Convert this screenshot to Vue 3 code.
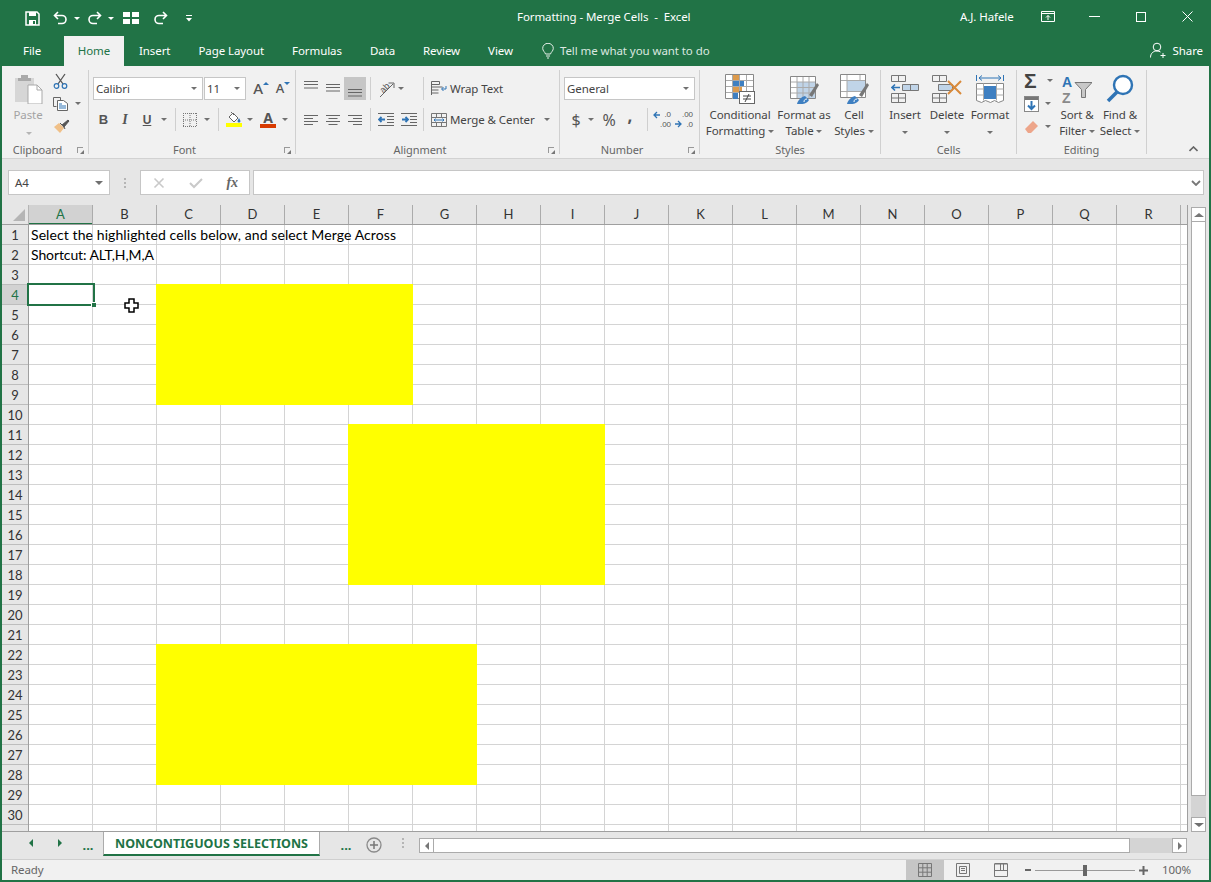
<script setup>
const cols = 'ABCDEFGHIJKLMNOPQR'.split('').concat([''])
const rows = Array.from({ length: 31 }, (_, i) => i + 1)
const blocks = [
  { c: 3, cs: 4, r: 4, rs: 6 },
  { c: 6, cs: 4, r: 11, rs: 8 },
  { c: 3, cs: 5, r: 22, rs: 7 },
]
function area(b) {
  return { gridColumn: `${b.c} / span ${b.cs}`, gridRow: `${b.r} / span ${b.rs}` }
}
</script>

<template>
  <div class="win">
    <header class="title">
      <div class="qat">
        <svg class="q1" width="15" height="15" viewBox="0 0 15 15"><path d="M1 1h11l2 2v11H1z" fill="none" stroke="#fff" stroke-width="1.5"/><rect x="4" y="1" width="7" height="4" fill="#fff"/><rect x="4" y="9" width="7" height="5" fill="#fff"/><rect x="8" y="10" width="2" height="3" fill="#217346"/></svg>
        <svg class="q2" width="15" height="14" viewBox="0 0 15 14"><path d="M5 1 1.500 4.500 5 8M2 4.500h7a4 4 0 0 1 0 8H5" fill="none" stroke="#fff" stroke-width="1.6"/></svg>
        <i class="car white q3"></i>
        <svg class="q4" width="15" height="14" viewBox="0 0 15 14"><path d="M10 1l3.500 3.500L10 8M13 4.500H6a4 4 0 0 0 0 8h4" fill="none" stroke="#fff" stroke-width="1.6"/></svg>
        <i class="car white q5"></i>
        <svg class="q6" width="16" height="12" viewBox="0 0 16 12"><path d="M0 0h7v5H0zM9 0h7v5H9zM0 7h7v5H0zM9 7h7v5H9z" fill="#fff"/></svg>
        <svg class="q7" width="15" height="14" viewBox="0 0 15 14"><path d="M10 1l3.500 3.500L10 8M13 4.500H6a4 4 0 0 0 0 8h4" fill="none" stroke="#fff" stroke-width="1.6"/></svg>
        <svg class="q8" width="6" height="7" viewBox="0 0 6 7"><path d="M0 0h6v1H0zM0 3h6L3 6.500z" fill="#fff"/></svg>
      </div>
      <div class="doc">Formatting - Merge Cells &nbsp;-&nbsp; Excel</div>
      <div class="user">A.J. Hafele</div>
      <svg class="wc1" width="14" height="11" viewBox="0 0 14 11"><path d="M.5.500h13v10H.5zM.5 2.500h13M7 9V4.500M5 6.500l2-2 2 2" fill="none" stroke="#fff"/></svg>
      <svg class="wc2" width="11" height="1" viewBox="0 0 11 1"><rect width="11" height="1" fill="#fff"/></svg>
      <svg class="wc3" width="10" height="10" viewBox="0 0 10 10"><rect x=".5" y=".5" width="9" height="9" fill="none" stroke="#fff"/></svg>
      <svg class="wc4" width="11" height="11" viewBox="0 0 11 11"><path d="M.5.500l10 10M10.500.500l-10 10" stroke="#fff" fill="none"/></svg>
    </header>

    <nav class="tabs">
      <span class="tab file">File</span>
      <span class="tab home">Home</span>
      <span class="tab">Insert</span>
      <span class="tab">Page Layout</span>
      <span class="tab">Formulas</span>
      <span class="tab">Data</span>
      <span class="tab">Review</span>
      <span class="tab">View</span>
      <svg class="bulb" width="12" height="16" viewBox="0 0 12 16"><path d="M3.500 11C3 9 .7 8 .7 5.300a5.300 5 0 0 1 10.600 0C11.300 8 9 9 8.500 11zM4 13h4M5 15h2" fill="none" stroke="#e4efe8"/></svg>
      <span class="tell">Tell me what you want to do</span>
      <svg class="person" width="17" height="17" viewBox="0 0 17 17"><circle cx="7" cy="5" r="3.800" fill="none" stroke="#fff"/><path d="M.5 15.500c0-4 2.500-6.500 6.500-6.500 1.500 0 2.500.4 3.500 1M13 11v5M10.500 13.500h5" fill="none" stroke="#fff"/></svg>
      <span class="share">Share</span>
    </nav>

    <section class="ribbon">
      <!-- Clipboard -->
      <div class="group g1">
        <div class="body">
          <div class="big pastebox dim">
            <svg width="30" height="30" viewBox="0 0 30 30"><path d="M1 4h19v24H1z" fill="#d6d6d6"/><path d="M7 4V1h7v3h3v3H4V4z" fill="#a9a9a9"/><path d="M14 11h9l5 5v14H14z" fill="#fff" stroke="#a9a9a9"/><path d="M23 11v5h5" fill="none" stroke="#a9a9a9"/></svg>
            <span class="line pastetext">Paste</span>
            <i class="car pale"></i>
          </div>
          <div class="stack">
            <div class="srow">
              <svg width="15" height="16" viewBox="0 0 15 16"><path d="M3 1l7 10M12 1 5 11" stroke="#555" stroke-width="1.300" fill="none"/><circle cx="3.500" cy="13" r="2.300" fill="none" stroke="#2f74b5" stroke-width="1.200"/><circle cx="11.500" cy="13" r="2.300" fill="none" stroke="#2f74b5" stroke-width="1.200"/></svg>
            </div>
            <div class="srow">
              <svg width="15" height="14" viewBox="0 0 15 14"><path d="M.5.500h7v3M.5.500v9h3" fill="none" stroke="#666"/><path d="M4.500 3.500h6l4 3v7h-10z" fill="#fff" stroke="#666"/><path d="M6 7h3M6 9h7M6 11h7" stroke="#2f74b5"/></svg>
              <i class="car c9"></i>
            </div>
            <div class="srow">
              <svg width="17" height="15" viewBox="0 0 17 15"><path d="M1 8 6 4l5 5-4 5z" fill="#f0c088"/><path d="M7 4l2 2 6-5 1 1-5 6 1 2" fill="#555" stroke="#555"/></svg>
            </div>
          </div>
        </div>
        <div class="label"><span>Clipboard</span><i class="launch"></i></div>
      </div>

      <!-- Font -->
      <div class="group g2">
        <div class="body col">
          <div class="row">
            <div class="combo w110"><span>Calibri</span><i class="car"></i></div>
            <div class="combo w42"><span>11</span><i class="car"></i></div>
            <span class="it w24 growa"><b class="aa a15">A</b><i class="up"></i></span>
            <span class="it w20 growa"><b class="aa a13">A</b><i class="dn"></i></span>
          </div>
          <div class="row">
            <span class="it w21 fb">B</span>
            <span class="it w22 fi">I</span>
            <span class="it w22 fu">U</span>
            <span class="it w12"><i class="car"></i></span>
            <span class="it w11"><i class="sep"></i></span>
            <span class="it w18">
              <svg width="14" height="14" viewBox="0 0 14 14"><path d="M.5 0v14M13.500 0v14M0 .5h14M0 13.500h14M7 0v14M0 7h14" fill="none" stroke="#777" stroke-dasharray="1 1"/></svg>
            </span>
            <span class="it w16"><i class="car"></i></span>
            <span class="it w7"><i class="sep"></i></span>
            <span class="it w24 colorbtn">
              <svg width="14" height="11" viewBox="0 0 14 11"><path d="M2 5 6 1l5 5-4 4z" fill="#fff" stroke="#666"/><path d="M4 0l3 3" stroke="#666"/><path d="M12 6l1.500 3a1.500 1.500 0 0 1-3 0z" fill="#2f74b5"/></svg>
              <i class="bar yellowbar"></i>
            </span>
            <span class="it w8"><i class="car"></i></span>
            <span class="it w28 colorbtn"><b class="fa">A</b><i class="bar redbar"></i></span>
            <span class="it w6"><i class="car"></i></span>
          </div>
        </div>
        <div class="label"><span>Font</span><i class="launch"></i></div>
      </div>

      <!-- Alignment -->
      <div class="group g3">
        <div class="body col">
          <div class="row">
            <span class="it w22"><svg class="vtop" width="14" height="8" viewBox="0 0 14 8"><path d="M0 .5h14M0 3.500h14M0 7h14" stroke="#666"/></svg></span>
            <span class="it w22"><svg class="vmid" width="14" height="8" viewBox="0 0 14 8"><path d="M0 .5h14M0 3.500h14M0 7h14" stroke="#666"/></svg></span>
            <span class="it w22 hot"><svg class="vbot" width="14" height="8" viewBox="0 0 14 8"><path d="M0 .5h14M0 3.500h14M0 7h14" stroke="#666"/></svg></span>
            <span class="it w8"><i class="sep"></i></span>
            <span class="it w24"><svg width="18" height="18" viewBox="0 0 18 18"><path d="M3 17 16 4" stroke="#666" fill="none"/><path d="M11.500 3H17v5" fill="none" stroke="#666"/><text x="4" y="12" class="svgt" transform="rotate(-45 7 10)">ab</text></svg></span>
            <span class="it w6"><i class="car"></i></span>
            <span class="it w15"></span>
            <span class="it w8"><i class="sep"></i></span>
            <span class="it w23"><svg width="16" height="15" viewBox="0 0 16 15"><path d="M.5.500h8v3h-8zM.5 6h11M.5 9h7M.5 12h7M.5 3v11" fill="none" stroke="#666"/><path d="M15 5v3h-4M12.500 6l-2 2 2 2" fill="none" stroke="#2f74b5"/></svg></span>
            <span class="txt">Wrap Text</span>
          </div>
          <div class="row">
            <span class="it w22"><svg width="14" height="10" viewBox="0 0 14 10"><path d="M0 .5h14M0 3.500h9M0 6.500h14M0 9.500h9" stroke="#666"/></svg></span>
            <span class="it w22"><svg width="14" height="10" viewBox="0 0 14 10"><path d="M0 .5h14M2.500 3.500h9M0 6.500h14M2.500 9.500h9" stroke="#666"/></svg></span>
            <span class="it w22"><svg width="14" height="10" viewBox="0 0 14 10"><path d="M0 .5h14M5 3.500h9M0 6.500h14M5 9.500h9" stroke="#666"/></svg></span>
            <span class="it w8"><i class="sep"></i></span>
            <span class="it w24"><svg width="16" height="13" viewBox="0 0 16 13"><path d="M0 .5h16M9 3.500h7M9 6.500h7M9 9.500h7M0 12.500h16" stroke="#666" fill="none"/><path d="M7 6.500H1M3.500 4 1 6.500 3.500 9" fill="none" stroke="#2f74b5" stroke-width="1.800"/></svg></span>
            <span class="it w21"><svg width="16" height="13" viewBox="0 0 16 13"><path d="M0 .5h16M9 3.500h7M9 6.500h7M9 9.500h7M0 12.500h16" stroke="#666" fill="none"/><path d="M1 6.500h6M4.500 4 7 6.500 4.500 9" fill="none" stroke="#2f74b5" stroke-width="1.800"/></svg></span>
            <span class="it w8"><i class="sep"></i></span>
            <span class="it w23"><svg width="16" height="14" viewBox="0 0 16 14"><path d="M.5.500h15v13H.5zM.5 4.500h15M.5 9.500h15M5.500.5v4M10.500.5v4M5.500 9.500v4M10.500 9.500v4" fill="none" stroke="#777"/><path d="M3 7h10M4.500 5.500 3 7l1.500 1.500M11.500 5.500 13 7l-1.500 1.500" fill="none" stroke="#2f74b5"/></svg></span>
            <span class="txt mc">Merge &amp; Center</span>
            <i class="car"></i>
          </div>
        </div>
        <div class="label"><span>Alignment</span><i class="launch"></i></div>
      </div>

      <!-- Number -->
      <div class="group g4">
        <div class="body col">
          <div class="row">
            <div class="combo w131"><span>General</span><i class="car"></i></div>
          </div>
          <div class="row">
            <span class="it w24 sym">$</span>
            <span class="it w6"><i class="car"></i></span>
            <span class="it w30 sym">%</span>
            <span class="it w12 sym comma">,</span>
            <span class="it w7"></span>
            <span class="it w8"><i class="sep"></i></span>
            <span class="it w22 dec"><svg width="7" height="8" viewBox="0 0 7 8"><path d="M7 4H1M4 1 1 4l3 3" fill="none" stroke="#2f74b5" stroke-width="1.300"/></svg><span class="dect"><span>.0</span><span>.00</span></span></span>
            <span class="it w22 dec"><svg width="7" height="8" class="low" viewBox="0 0 7 8"><path d="M0 4h6M3 1l3 3-3 3" fill="none" stroke="#2f74b5" stroke-width="1.300"/></svg><span class="dect"><span>.00</span><span>.0</span></span></span>
          </div>
        </div>
        <div class="label"><span>Number</span><i class="launch"></i></div>
      </div>

      <!-- Styles -->
      <div class="group g5">
        <div class="body">
          <div class="big w64">
            <svg width="30" height="30" viewBox="0 0 30 30"><path d="M.5.500h28v24H.5z" fill="#fff" stroke="#888"/><path d="M7 1h7v6H7zM7 13h10v6H7z" fill="#dc9a4c"/><path d="M7 7h12v6H7zM7 19h6v6H7z" fill="#3e7fc1"/><path d="M7.500 1v24M14.500 1v24M21.500 1v18M1 6.500h27M1 12.500h27M1 18.500h27" stroke="#aaa" fill="none"/><rect x="14.500" y="17.500" width="15" height="12" fill="#fff" stroke="#666"/><path d="M18 22h8M18 25h8M24 20l-4 8" stroke="#444" fill="none"/></svg>
            <span class="line">Conditional</span>
            <span class="line">Formatting <i class="car"></i></span>
          </div>
          <div class="big w64">
            <svg width="30" height="30" viewBox="0 0 30 30"><path d="M1.500 2.500h25v22h-25z" fill="#fff" stroke="#888"/><rect x="8" y="8" width="18" height="16" fill="#c0d4e8"/><path d="M8 3v21M14 3v21M20 3v21M2 8h24M2 13.500h24M2 19h24" stroke="#aaa" fill="none"/><path d="M20 21 28 9l2 2-7 12z" fill="#777"/><path d="M8 30c1-4 4-7 8-8l4 4c-1 3-7 5-12 4z" fill="#3e7fc1"/><path d="M15 28c0-2 1-3 3-3" fill="none" stroke="#fff"/></svg>
            <span class="line">Format as</span>
            <span class="line">Table <i class="car"></i></span>
          </div>
          <div class="big w36">
            <svg width="30" height="30" viewBox="0 0 30 30"><path d="M1.500.5h25v23h-25z" fill="#fff" stroke="#888"/><rect x="8" y="6" width="18" height="11" fill="#c0d4e8"/><path d="M8 1v22M2 6.500h24M2 17.500h24M21 1v5" stroke="#aaa" fill="none"/><path d="M20 21 28 9l2 2-7 12z" fill="#777"/><path d="M8 30c1-4 4-7 8-8l4 4c-1 3-7 5-12 4z" fill="#3e7fc1"/><path d="M15 28c0-2 1-3 3-3" fill="none" stroke="#fff"/></svg>
            <span class="line">Cell</span>
            <span class="line">Styles <i class="car"></i></span>
          </div>
        </div>
        <div class="label nol"><span>Styles</span></div>
      </div>

      <!-- Cells -->
      <div class="group g6">
        <div class="body">
          <div class="big w38">
            <svg width="28" height="28" viewBox="0 0 28 28"><path d="M.5.500h14v6H.5zM7.500.5v6M.5 18.500h14v9H.5zM.5 23h14M7.500 18.500v9" fill="none" stroke="#777"/><path d="M11.500 9.500h16v6h-16zM19.500 9.500v6" fill="#c0d4e8" stroke="#777"/><path d="M9 12.500H1M4 9.500l-3 3 3 3" fill="none" stroke="#2f74b5" stroke-width="1.600"/></svg>
            <span class="line">Insert</span>
            <i class="car under"></i>
          </div>
          <div class="big w46">
            <svg width="30" height="28" viewBox="0 0 30 28"><path d="M.5.500h14v6H.5zM7.500.5v6M.5 18.500h14v9H.5zM.5 23h14M7.500 18.500v9" fill="none" stroke="#777"/><path d="M6.500 9.500h14v6h-14z" fill="#c0d4e8" stroke="#777"/><path d="M16 6l13 13M29 6 16 19" stroke="#d98a3a" stroke-width="2" fill="none"/></svg>
            <span class="line">Delete</span>
            <i class="car under"></i>
          </div>
          <div class="big w40">
            <svg width="28" height="30" viewBox="0 0 28 30"><path d="M.5 1v6M27.500 1v6M3 4h22M6 1.500 3 4l3 2.500M22 1.500 25 4l-3 2.500" fill="none" stroke="#2f74b5"/><path d="M.5 9.500h27v17l-5 2-4-2-4 2-5-2-4 2-5-2z" fill="#fff" stroke="#888"/><path d="M7.500 9.500v17M20.500 9.500v17M.5 15h27M.5 21h27" fill="none" stroke="#aaa"/><rect x="8" y="12" width="12" height="13" fill="#3e7fc1"/></svg>
            <span class="line">Format</span>
            <i class="car under"></i>
          </div>
        </div>
        <div class="label nol"><span>Cells</span></div>
      </div>

      <!-- Editing -->
      <div class="group g7">
        <div class="body">
          <div class="stack st2">
            <div class="srow"><span class="sigma">Σ</span><i class="car c8"></i></div>
            <div class="srow">
              <svg width="15" height="16" viewBox="0 0 15 16"><rect x=".5" y=".5" width="14" height="15" fill="#fff" stroke="#888"/><rect x="1" y="1" width="13" height="3" fill="#777"/><path d="M7.500 5v8M4 9.500l3.500 3.500L11 9.500" fill="none" stroke="#2f74b5" stroke-width="2"/></svg>
              <i class="car c6"></i>
            </div>
            <div class="srow">
              <svg width="15" height="14" viewBox="0 0 15 14"><path d="M1 9 9 1l5 5-7 7H4z" fill="#eda58a"/></svg>
              <i class="car c6"></i>
            </div>
          </div>
          <div class="big w48">
            <svg class="sorticon" width="30" height="32" viewBox="0 0 30 32"><text x="0" y="13" class="az blue">A</text><text x="0" y="28.700" class="az grey">Z</text><path d="M13 8.500h17l-6.500 7v8h-4v-8z" fill="#c8c8c8" stroke="#777"/></svg>
            <span class="line">Sort &amp;</span>
            <span class="line">Filter <i class="car"></i></span>
          </div>
          <div class="big w38">
            <svg width="28" height="30" viewBox="0 0 28 30"><circle cx="17" cy="11" r="9" fill="#fff" stroke="#2f74b5" stroke-width="2.400"/><path d="M11 18 2 27" stroke="#2f74b5" stroke-width="3.600"/></svg>
            <span class="line">Find &amp;</span>
            <span class="line">Select <i class="car"></i></span>
          </div>
        </div>
        <div class="label nol"><span>Editing</span></div>
      </div>

      <div class="collapse">
        <svg width="9" height="6" viewBox="0 0 9 6"><path d="M.5 5 4.500 1l4 4" fill="none" stroke="#666" stroke-width="1.600"/></svg>
      </div>
    </section>

    <section class="fbar">
      <div class="namebox"><span>A4</span><i class="car big-car"></i></div>
      <div class="grip"><i></i><i></i><i></i></div>
      <div class="fxbox">
        <svg width="13" height="12" viewBox="0 0 13 12"><path d="M1.500 1.500l9 9M10.500 1.500l-9 9" stroke="#c9c9c9" stroke-width="1.600" fill="none"/></svg>
        <svg width="14" height="12" viewBox="0 0 14 12"><path d="M1 6l4 4 8-8" stroke="#c9c9c9" stroke-width="2" fill="none"/></svg>
        <span class="fx">fx</span>
      </div>
      <div class="finput">
        <svg width="10" height="6" viewBox="0 0 10 6"><path d="M1 1l4 4 4-4" fill="none" stroke="#777" stroke-width="1.800"/></svg>
      </div>
    </section>

    <section class="sheet">
      <div class="gridwrap">
        <div class="colhead">
          <div class="corner"><i></i></div>
          <div v-for="(c, i) in cols" :key="i" class="ch" :class="{ act: c === 'A' }">{{ c }}</div>
        </div>
        <div class="gridbody">
          <div class="rowhead">
            <div v-for="r in rows" :key="r" class="rh" :class="{ act: r === 4 }">{{ r < 31 ? r : '' }}</div>
          </div>
          <div class="cells">
            <div class="celltext t1">Select the highlighted cells below, and select Merge Across</div>
            <div class="celltext t2">Shortcut: ALT,H,M,A</div>
            <div v-for="(b, i) in blocks" :key="i" class="fill" :style="area(b)"></div>
            <div class="sel"><i class="handle"></i></div>
            <svg class="cursor" width="15" height="15" viewBox="0 0 15 15"><path d="M5 1h5v4h4v5h-4v4H5v-4H1V5h4z" fill="#fff" stroke="#000" stroke-width="1.500"/></svg>
          </div>
        </div>
      </div>
      <div class="vscroll">
        <div class="sbtn"><i class="car upc"></i></div>
        <div class="vthumb"></div>
        <div class="vtrack"></div>
        <div class="sbtn"><i class="car dnc"></i></div>
      </div>
    </section>

    <section class="tabbar">
      <span class="nav n1"><i class="tl"></i></span>
      <span class="nav n2"><i class="tr"></i></span>
      <span class="dots d1">...</span>
      <span class="stab">NONCONTIGUOUS SELECTIONS</span>
      <span class="dots d2">...</span>
      <svg class="plus" width="16" height="16" viewBox="0 0 16 16"><circle cx="8" cy="8" r="7" fill="none" stroke="#8a8a8a" stroke-width="1.300"/><path d="M8 4v8M4 8h8" stroke="#777" stroke-width="1.500"/></svg>
      <div class="grip g2b"><i></i><i></i><i></i></div>
      <div class="hscroll">
        <div class="hbtn"><i class="tl grey"></i></div>
        <div class="hthumb"></div>
        <div class="htrack"></div>
        <div class="hbtn"><i class="tr grey"></i></div>
      </div>
    </section>

    <footer class="status">
      <span class="ready">Ready</span>
      <div class="view on">
        <svg width="14" height="14" viewBox="0 0 14 14"><path d="M.5.500h13v13H.5zM4.800.5v13M9.200.5v13M.5 4.800h13M.5 9.200h13" fill="none" stroke="#777"/></svg>
      </div>
      <div class="view">
        <svg width="14" height="14" viewBox="0 0 14 14"><path d="M.5.500h13v13H.5z" fill="none" stroke="#777"/><path d="M3.500 3.500h7v7h-7zM5 5.500h4M5 7.500h4" fill="none" stroke="#777"/></svg>
      </div>
      <div class="view">
        <svg width="14" height="14" viewBox="0 0 14 14"><path d="M.5 1v12.500h13V1zM.5.500h13M.5 7.500h13M6.500.5v7M9.500.5v7" fill="none" stroke="#777"/></svg>
      </div>
      <span class="zm">
        <i class="minus"></i>
        <span class="slider"><i class="knob"></i></span>
        <svg width="9" height="9" viewBox="0 0 9 9"><path d="M4.500 0v9M0 4.500h9" stroke="#666" stroke-width="2"/></svg>
      </span>
      <span class="pct">100%</span>
    </footer>
  </div>
</template>

<style scoped>
.win {
  width: 1211px;
  height: 882px;
  box-sizing: border-box;
  border-left: 2px solid #217346;
  border-right: 2px solid #217346;
  border-bottom: 2px solid #217346;
  display: flex;
  flex-direction: column;
  font-family: "Noto Sans", sans-serif;
  font-size: 11.5px;
  letter-spacing: -0.08px;
  color: #444;
  background: #f1f1f1;
  overflow: hidden;
}
i { display: block; font-style: normal; }
svg { display: block; flex: none; }

.title {
  height: 36px;
  margin-left: -2px;
  margin-right: -2px;
  background: #217346;
  color: #fff;
  display: flex;
  align-items: center;
  flex: none;
}
.qat { width: 517px; display: flex; align-items: center; }
.q1 { margin-left: 25px; }
.q2 { margin-left: 13px; }
.q3 { margin-left: 6px; }
.q4 { margin-left: 7px; }
.q5 { margin-left: 6px; }
.q6 { margin-left: 9px; }
.q7 { margin-left: 14px; }
.q8 { margin-left: 18px; }
.doc { width: 443px; color: #fff; margin-top: -3px; }
.user { width: 81px; margin-top: -3px; }
.wc1 { margin-top: -3px; }
.wc2 { margin-left: 34px; margin-top: -3px; }
.wc3 { margin-left: 36px; margin-top: -3px; }
.wc4 { margin-left: 36px; margin-top: -3px; }

.tabs {
  height: 30px;
  margin-left: -2px;
  margin-right: -2px;
  flex: none;
  background: #217346;
  color: #fff;
  display: flex;
  align-items: stretch;
  line-height: 30px;
}
.tab { padding: 0 14px; white-space: nowrap; }
.tab.file { width: 64px; box-sizing: border-box; padding: 0 0 0 23px; }
.tab.home { background: #f1f1f1; color: #217346; width: 60px; padding: 0; text-align: center; box-sizing: border-box; }
.tab.home + .tab { padding-left: 15px; }
.bulb { margin: 7px 0 0 15px; }
.tell { margin-left: 6px; flex: 1; color: #dbe8e0; white-space: nowrap; }
.person { margin-top: 6px; }
.share { margin-left: 6px; margin-right: 8px; }

.ribbon {
  height: 93px;
  flex: none;
  box-sizing: border-box;
  border-bottom: 1px solid #d2d2d2;
  display: flex;
  align-items: flex-start;
  padding-top: 4px;
}
.group {
  height: 84px;
  box-sizing: border-box;
  border-right: 1px solid #d0d0d0;
  display: flex;
  flex-direction: column;
  flex: none;
}
.g1 { width: 87px; }
.g2 { width: 207px; }
.g3 { width: 264px; }
.g4 { width: 140px; }
.g5 { width: 181px; }
.g6 { width: 136px; }
.g7 { width: 130px; }
.body { flex: 1; display: flex; min-height: 0; }
.body.col { flex-direction: column; padding: 7px 0 0 4px; gap: 8px; }
.g5 .body { padding-left: 8px; }
.g6 .body { padding-left: 5px; }
.row { display: flex; height: 23px; align-items: center; flex: none; }
.label {
  height: 14px;
  margin-bottom: -3px;
  line-height: 14px;
  display: flex;
  color: #666;
  font-size: 11px;
  flex: none;
}
.label span { flex: 1; text-align: center; }
.launch {
  width: 15px;
  position: relative;
  flex: none;
}
.launch::before {
  content: "";
  position: absolute;
  left: 4px;
  top: 4px;
  width: 6px;
  height: 6px;
  border-left: 1px solid #999;
  border-top: 1px solid #999;
  box-sizing: border-box;
}
.launch::after {
  content: "";
  position: absolute;
  left: 7px;
  top: 7px;
  width: 0;
  height: 0;
  border-style: solid;
  border-width: 0 0 4px 4px;
  border-color: transparent transparent #777 transparent;
}

.big {
  display: flex;
  flex-direction: column;
  align-items: center;
  padding-top: 4px;
  flex: none;
  color: #444;
}
.big > svg { height: 30px; }
.big > svg.sorticon { height: 32px; margin-bottom: -2px; }
.big .line { line-height: 16px; height: 16px; white-space: nowrap; margin-top: 0; }
.big > svg + .line { margin-top: 3px; }
.big > svg + .pastetext { margin-right: 2px; }
.line .car { display: inline-block; vertical-align: middle; margin-left: 0; }
.big > .car { margin-top: 6px; }
.big > .car.under { margin-top: 8px; }
.pastebox { width: 46px; margin-left: 4px; }
.dim { color: #a3a3a3; }
.w36 { width: 36px; }
.w38 { width: 38px; }
.w40 { width: 40px; }
.w46 { width: 46px; }
.w48 { width: 48px; }
.w64 { width: 64px; }

.stack { display: flex; flex-direction: column; margin-top: -1px; margin-left: 1px; }
.st2 { width: 36px; margin: -1px 0 0 0; padding-left: 7px; box-sizing: border-box; }
.srow { height: 23px; display: flex; align-items: center; gap: 7px; }
.c8 { margin-left: 1px; }
.c6 { margin-left: -1px; }
.c9 { margin-left: 0; }
.sigma { font-family: "Liberation Sans", sans-serif; font-size: 21px; line-height: 20px; color: #444; width: 16px; font-weight: 700; }

.car {
  width: 0;
  height: 0;
  border-style: solid;
  border-width: 3px 3px 0 3px;
  border-color: #707070 transparent transparent transparent;
  flex: none;
}
.car.white { border-top-color: #fff; }
.car.pale { border-top-color: #b5b5b5; margin-top: 9px; }
.car.upc { border-width: 0 5px 4px 5px; border-color: transparent transparent #777 transparent; }
.car.dnc { border-width: 4px 5px 0 5px; }
.car.big-car { border-width: 4px 4px 0 4px; }

.combo {
  height: 23px;
  box-sizing: border-box;
  background: #fff;
  border: 1px solid #c6c6c6;
  display: flex;
  align-items: center;
  justify-content: space-between;
  padding: 0 5px 0 2px;
  color: #444;
  flex: none;
}
.w110 { width: 110px; margin-right: 1px; }
.w42 { width: 42px; margin-right: 3px; }
.w131 { width: 131px; }

.it { display: flex; align-items: center; justify-content: center; height: 23px; flex: none; }
.w6 { width: 6px; }
.w7 { width: 7px; }
.w8 { width: 8px; }
.w11 { width: 11px; }
.w12 { width: 12px; }
.w15 { width: 15px; }
.w16 { width: 16px; }
.w18 { width: 18px; }
.w20 { width: 20px; }
.w21 { width: 21px; }
.w22 { width: 22px; }
.w23 { width: 23px; }
.w24 { width: 24px; }
.w28 { width: 28px; }
.w30 { width: 30px; }
.sep { width: 1px; height: 23px; background: #cfcfcf; }
.hot { background: #c6c6c6; }
.vtop { margin-top: -8px; }
.vmid { margin-top: -1px; }
.vbot { margin-top: 8px; }
.growa { position: relative; }
.aa { font-family: "Noto Sans", sans-serif; color: #555; font-weight: 500; line-height: 1; }
.a15 { font-size: 15px; }
.a13 { font-size: 13px; }
.up, .dn {
  width: 0; height: 0; border-style: solid; margin-top: -10px; flex: none;
}
.up { border-width: 0 3px 3px 3px; border-color: transparent transparent #2f74b5 transparent; }
.dn { border-width: 3px 3px 0 3px; border-color: #2f74b5 transparent transparent transparent; }
.fb { font-family: "Liberation Sans", sans-serif; font-weight: 700; font-size: 13px; color: #555; }
.fi { font-family: "Liberation Serif", serif; font-style: italic; font-weight: 700; font-size: 14px; color: #555; }
.fu { font-family: "Liberation Sans", sans-serif; font-weight: 700; font-size: 12px; color: #555; text-decoration: underline; }
.colorbtn { flex-direction: column; gap: 0; }
.bar { width: 16px; height: 4px; }
.yellowbar { background: #ffff00; }
.redbar { background: #d83b01; }
.fa { font-size: 14px; line-height: 13px; color: #555; font-weight: 700; }
.txt { white-space: nowrap; color: #444; margin-top: -1px; }
.mc { width: 91px; margin-right: 3px; }
.svgt { font-size: 9px; fill: #555; font-family: "Liberation Sans", sans-serif; }
.sym { font-size: 16px; color: #555; }
.comma { font-weight: 700; font-size: 17px; padding-bottom: 9px; box-sizing: border-box; }
.dec { gap: 0; }
.dec svg { margin-top: -9px; }
.dec svg.low { margin-top: 9px; }
.dect { display: flex; flex-direction: column; align-items: flex-end; font-family: "Liberation Sans", sans-serif; font-size: 8px; line-height: 10px; letter-spacing: 0; color: #555; }
.az { font-family: "Liberation Sans", sans-serif; font-size: 14px; font-weight: 700; }
.blue { fill: #2f74b5; }
.grey { fill: #8a8a8a; }
.collapse { flex: 1; align-self: flex-end; display: flex; justify-content: flex-end; padding: 0 11px 6px 0; }

.fbar {
  height: 46px;
  flex: none;
  box-sizing: border-box;
  background: #e6e6e6;
  display: flex;
  padding: 11px 5px 10px 6px;
}
.namebox, .fxbox, .finput {
  background: #fff;
  border: 1px solid #c6c6c6;
  box-sizing: border-box;
  display: flex;
  align-items: center;
}
.namebox { width: 102px; justify-content: space-between; padding: 0 6px 0 6px; color: #444; }
.grip { width: 30px; display: flex; flex-direction: column; align-items: center; justify-content: center; gap: 2px; flex: none; }
.grip i { width: 2px; height: 2px; background: #b5b5b5; }
.fxbox { width: 110px; margin-right: 3px; justify-content: space-between; padding: 0 11px 0 12px; }
.fx { font-family: "Liberation Serif", serif; font-style: italic; font-size: 14px; color: #666; font-weight: 700; }
.finput { flex: 1; justify-content: flex-end; padding-right: 2px; }

.sheet { height: 627px; flex: none; display: flex; background: #e6e6e6; }
.gridwrap { width: 1186px; flex: none; display: flex; flex-direction: column; overflow: hidden; }
.colhead { height: 20px; display: flex; flex: none; box-sizing: border-box; border-bottom: 1px solid #9f9f9f; border-right: 1px solid #9f9f9f; overflow: hidden; }
.corner { width: 27px; flex: none; box-sizing: border-box; border-right: 1px solid #b5b5b5; position: relative; }
.corner i { position: absolute; right: 3px; bottom: 3px; width: 0; height: 0; border-style: solid; border-width: 0 0 12px 12px; border-color: transparent transparent #b5b5b5 transparent; }
.ch {
  width: 64px; flex: none; box-sizing: border-box; text-align: center;
  border-right: 1px solid #ababab; line-height: 19px; font-size: 13px; letter-spacing: 0;
  font-family: "Lato", sans-serif; color: #333;
}
.ch.act { background: #d2d2d2; color: #217346; box-shadow: inset 0 -2px 0 #217346; height: 20px; }
.gridbody { flex: 1; display: flex; min-height: 0; border-bottom: 1px solid #9f9f9f; overflow: hidden; }
.rowhead { width: 27px; flex: none; box-sizing: border-box; border-right: 1px solid #9f9f9f; overflow: hidden; }
.rh { height: 20px; line-height: 21px; text-align: center; box-sizing: border-box; border-bottom: 1px solid #bdbdbd; font-size: 13px; letter-spacing: 0; font-family: "Lato", sans-serif; color: #333; }
.rh.act { background: #d2d2d2; color: #217346; }
.cells {
  flex: 1;
  min-width: 0;
  position: relative;
  display: grid;
  grid-template-columns: repeat(19, 64px);
  grid-template-rows: repeat(31, 20px);
  background-color: #fff;
  background-image:
    linear-gradient(to right, transparent 63px, #d4d4d4 63px),
    linear-gradient(to bottom, transparent 19px, #d4d4d4 19px);
  background-size: 64px 100%, 100% 20px;
  border-right: 1px solid #9f9f9f;
}
.celltext {
  white-space: nowrap;
  font-family: "Lato", sans-serif;
  font-size: 14px;
  line-height: 19px;
  color: #000;
  padding-left: 2px;
  z-index: 1;
  overflow: visible;
  width: 0;
}
.t1 { grid-column: 1; grid-row: 1; letter-spacing: 0.09px; }
.t2 { grid-column: 1; grid-row: 2; letter-spacing: -0.1px; }
.fill { background: #ffff00; margin: -1px 0 0 -1px; }
.sel {
  grid-column: 1;
  grid-row: 4;
  margin: -2px -2px -1px -2px;
  border: 2px solid #217346;
  position: relative;
  z-index: 2;
}
.handle {
  position: absolute;
  right: -3px;
  bottom: -3px;
  background: #217346;
  border-left: 1px solid #fff;
  border-top: 1px solid #fff;
  box-sizing: content-box;
  width: 4px;
  height: 4px;
}
.cursor { position: absolute; left: 95px; top: 73px; z-index: 3; }

.vscroll { flex: 1; padding: 2px 0 0 3px; display: flex; flex-direction: column; }
.sbtn { width: 15px; height: 15px; box-sizing: border-box; background: #fff; border: 1px solid #ababab; display: flex; align-items: center; justify-content: center; flex: none; }
.vthumb { width: 15px; height: 574px; background: #fff; box-sizing: border-box; border: 1px solid #ababab; border-top: 0; flex: none; }
.vtrack { width: 15px; height: 21px; background: #d4d4d4; flex: none; }

.tabbar {
  height: 28px;
  flex: none;
  box-sizing: border-box;
  border-bottom: 1px solid #cfcfcf;
  background: #e6e6e6;
  display: flex;
  align-items: flex-start;
}
.nav { display: flex; align-items: center; justify-content: center; width: 8px; height: 22px; }
.n1 { margin-left: 25px; }
.n2 { margin-left: 21px; }
.tl, .tr { width: 0; height: 0; border-style: solid; }
.tl { border-width: 4px 4px 4px 0; border-color: transparent #217346 transparent transparent; }
.tr { border-width: 4px 0 4px 4px; border-color: transparent transparent transparent #217346; }
.tl.grey { border-right-color: #777; }
.tr.grey { border-left-color: #777; }
.dots { font-weight: 700; color: #217346; font-size: 13px; line-height: 26px; width: 16px; text-align: center; letter-spacing: 0; }
.d1 { margin-left: 16px; }
.d2 { margin-left: 18px; }
.stab {
  margin-left: 7px;
  width: 217px;
  height: 24px;
  box-sizing: border-box;
  background: #fff;
  border-left: 1px solid #ababab;
  border-right: 1px solid #ababab;
  border-bottom: 2px solid #217346;
  color: #217346;
  font-weight: 700;
  font-size: 12.500px;
  letter-spacing: 0;
  text-align: center;
  line-height: 23px;
  white-space: nowrap;
  overflow: hidden;
}
.plus { margin: 5px 0 0 12px; }
.g2b { width: 30px; height: 22px; margin-left: 6px; }
.hscroll { display: flex; height: 15px; margin-top: 6px; width: 768px; flex: none; margin-left: 1px; }
.hbtn { width: 15px; height: 15px; box-sizing: border-box; background: #fff; border: 1px solid #ababab; display: flex; align-items: center; justify-content: center; flex: none; }
.hthumb { width: 696px; background: #fff; box-sizing: border-box; border: 1px solid #ababab; border-left: 0; flex: none; }
.htrack { flex: 1; background: #d4d4d4; }

.status {
  height: 20px;
  flex: none;
  background: #f1f1f1;
  display: flex;
  align-items: center;
  color: #666;
}
.ready { margin-left: 9px; width: 895px; margin-top: -2px; }
.view { width: 38px; height: 20px; display: flex; align-items: center; justify-content: center; flex: none; }
.view.on { background: #c6c6c6; }
.zm { margin-left: 5px; display: flex; align-items: center; }
.minus { width: 6px; height: 2px; background: #666; margin-right: 4px; }
.slider { width: 100px; height: 1px; background: #999; position: relative; margin-right: 4px; }
.knob { position: absolute; left: 48px; top: -5px; width: 4px; height: 11px; background: #666; }
.pct { margin-left: 14px; color: #666; margin-top: -2px; }
</style>

<style>
html, body { margin: 0; padding: 0; overflow: hidden; }
</style>
